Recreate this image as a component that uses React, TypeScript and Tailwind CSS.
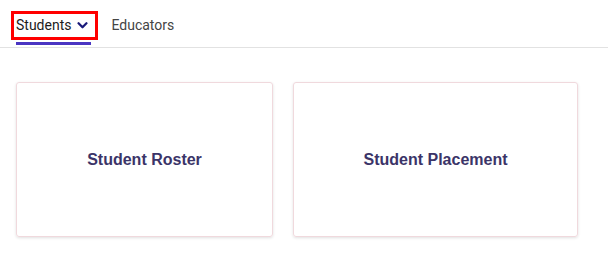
import React from "react";

// Tabs + launcher cards

const CARDS = [
    { id: "roster", label: "Student Roster", width: "w-[257px]" },
    { id: "placement", label: "Student Placement", width: "w-[285px]" },
];

function Chevron() {
    return (
        <svg viewBox="0 0 12 8" className="w-[11px] h-[7px] text-[#1a1a7a]" fill="none" stroke="currentColor" strokeWidth={2.6} strokeLinecap="round" strokeLinejoin="round">
            <path d="M1.5 1.5L6 6l4.5-4.5" />
        </svg>
    );
}

export default function App() {
    return (
        <div className="w-[608px] h-[268px] bg-white font-['Roboto',sans-serif]">
            {/* Tab bar */}
            <div className="flex items-start h-[48px] border-b border-[#e2e2e2] pl-[11px] pt-[11px]">
                <div className="flex flex-col">
                    <button className="flex items-center gap-[6px] h-[29px] pl-[2px] pr-[7px] border-[3px] border-[#ff0000] text-[14px] text-[#1c1c1c]">
                        Students
                        <Chevron />
                    </button>
                    <div className="ml-[5px] mt-[2px] w-[75px] h-[3px] bg-[#4a35c2]" />
                </div>
                <button className="ml-[13px] h-[29px] text-[14px] text-[#444444]">Educators</button>
            </div>

            {/* Cards */}
            <div className="flex gap-[20px] px-[16px] pt-[34px]">
                {CARDS.map(c => (
                    <div
                        key={c.id}
                        className={`${c.width} h-[155px] flex items-center justify-center rounded-[3px] border border-[#f0d9dd] shadow-[0_1px_3px_rgba(0,0,0,0.12)]`}
                    >
                        <span className="font-['Liberation_Sans',Arial,sans-serif] font-bold text-[16px] text-[#3b3468]">
                            {c.label}
                        </span>
                    </div>
                ))}
            </div>
        </div>
    );
}
